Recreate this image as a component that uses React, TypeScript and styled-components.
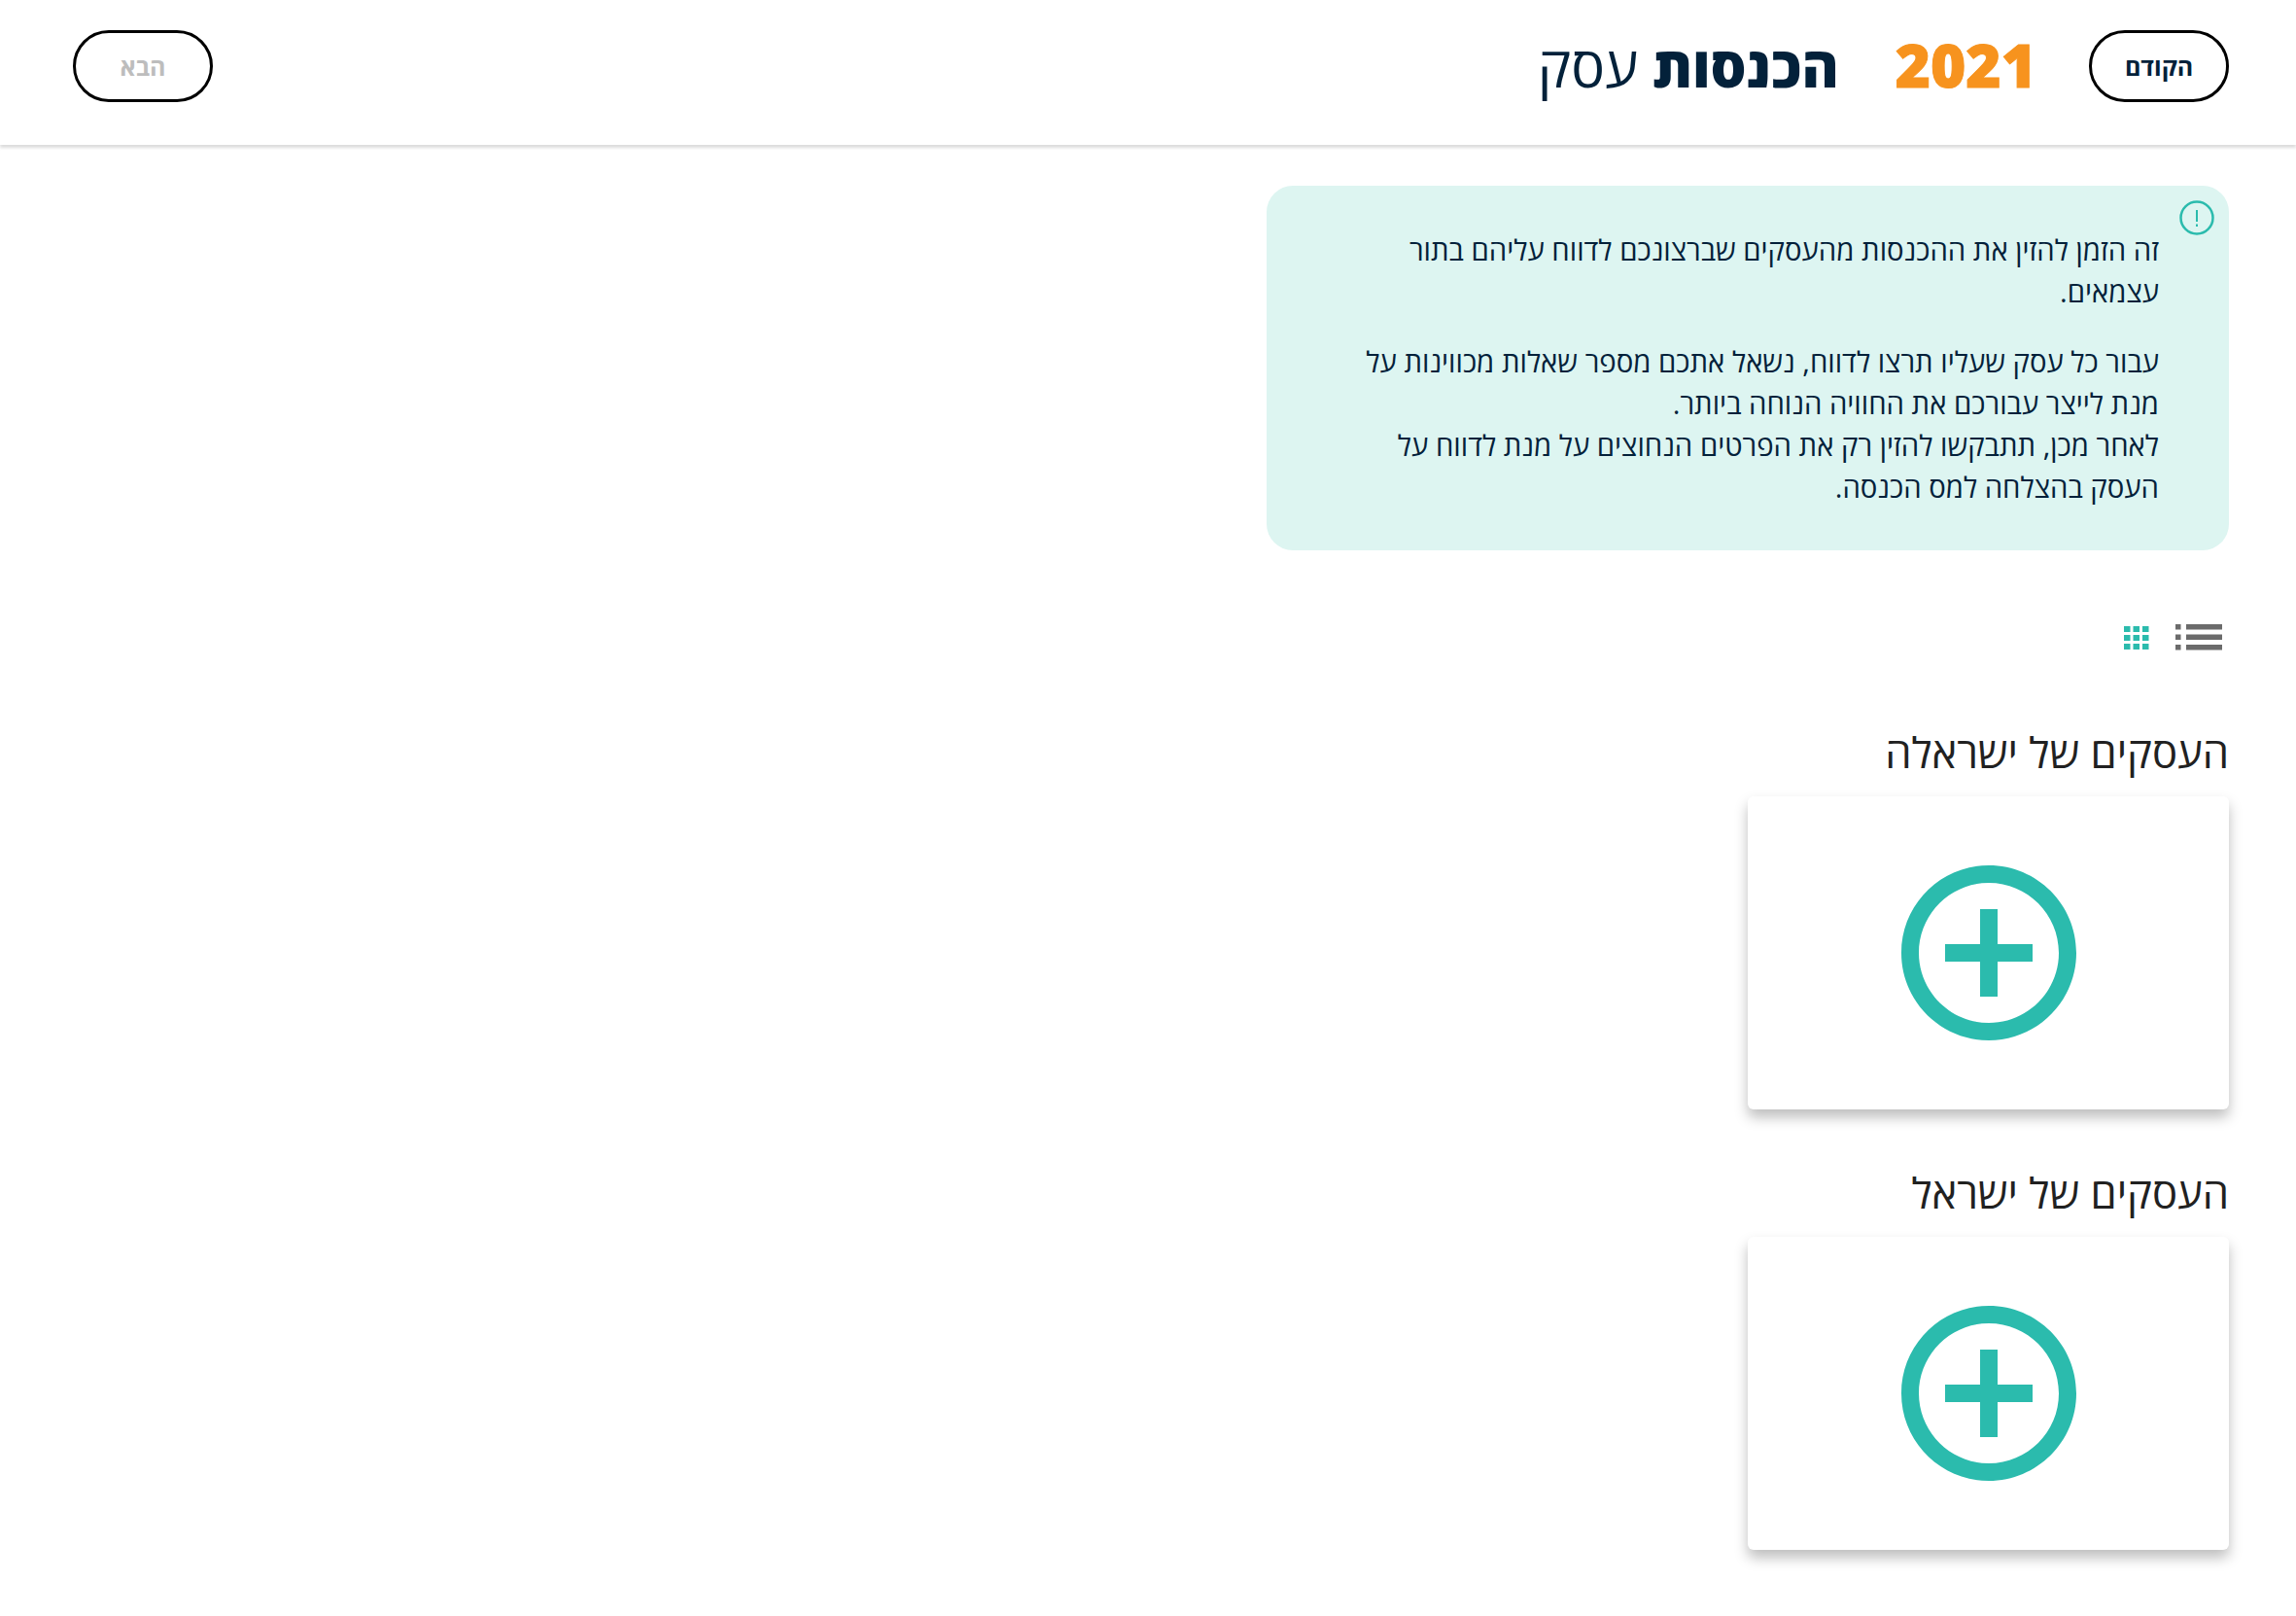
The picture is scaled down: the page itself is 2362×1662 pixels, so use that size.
import { MdAddCircleOutline } from 'react-icons/md';
import styled, { createGlobalStyle } from 'styled-components';

const sections = ['העסקים של ישראלה', 'העסקים של ישראל'];

const GridIcon = () => (
  <svg width="26" height="24" viewBox="0 0 26 24" fill="#2bbbad">
    {[0, 9, 18].map((y) =>
      [0, 9.5, 19].map((x) => <rect key={`${x}-${y}`} x={x} y={y} width="6.5" height="6" />),
    )}
  </svg>
);

const ListIcon = () => (
  <svg width="48" height="28" viewBox="0 0 48 28" fill="#6b6b6b">
    {[0, 10.5, 21].map((y) => (
      <g key={y}>
        <rect x="0" y={y} width="5.5" height="5.5" />
        <rect x="11" y={y} width="37" height="5.5" />
      </g>
    ))}
  </svg>
);

const App = () => {
  return (
    <Page dir="rtl">
      <GlobalStyle />
      <Header>
        <HeaderSide>
          <NavButton>הקודם</NavButton>
          <Year>2021</Year>
          <Title>
            <b>הכנסות</b> עסק
          </Title>
        </HeaderSide>
        <NavButton disabled>הבא</NavButton>
      </Header>
      <Main>
        <Notice>
          <NoticeIcon>
            <svg width="36" height="36" viewBox="0 0 36 36" fill="none">
              <circle cx="18" cy="18" r="16.5" stroke="#2bbbad" strokeWidth="2.5" />
              <rect x="17" y="10" width="2" height="12" fill="#2bbbad" />
              <rect x="17" y="24.5" width="2" height="2.5" fill="#2bbbad" />
            </svg>
          </NoticeIcon>
          <NoticeText>זה הזמן להזין את ההכנסות מהעסקים שברצונכם לדווח עליהם בתור עצמאים.</NoticeText>
          <NoticeText>
            עבור כל עסק שעליו תרצו לדווח, נשאל אתכם מספר שאלות מכווינות על מנת לייצר עבורכם את החוויה הנוחה ביותר.
            <br />
            לאחר מכן, תתבקשו להזין רק את הפרטים הנחוצים על מנת לדווח על העסק בהצלחה למס הכנסה.
          </NoticeText>
        </Notice>
        <ViewToggle>
          <ListIcon />
          <GridIcon />
        </ViewToggle>
        {sections.map((name) => (
          <Section key={name}>
            <SectionTitle>{name}</SectionTitle>
            <AddCard>
              <MdAddCircleOutline size={216} color="#2bbbad" />
            </AddCard>
          </Section>
        ))}
      </Main>
    </Page>
  );
};

export default App;

const GlobalStyle = createGlobalStyle`
  html, body {
    margin: 0;
    background: #fff;
    font-family: "Open Sans", "Noto Sans", "Liberation Sans", sans-serif;
  }
`;

const Page = styled.div`
  height: 1662px;
  overflow: hidden;
  color: #03213a;
`;

const Header = styled.header`
  display: flex;
  align-items: center;
  justify-content: space-between;
  box-sizing: border-box;
  height: 149px;
  padding: 0 69px 14px 75px;
  box-shadow: 0 3px 3px rgba(0, 0, 0, 0.14);
`;

const HeaderSide = styled.div`
  display: flex;
  align-items: center;
`;

const NavButton = styled.button`
  width: 144px;
  height: 74px;
  border: 3px solid #000;
  border-radius: 37px;
  background: #fff;
  color: ${(p) => (p.disabled ? '#bdbdbd' : '#03213a')};
  font-family: inherit;
  font-size: 25px;
  font-weight: 700;
`;

const Year = styled.div`
  margin: 0 54px 3px 58px;
  color: #f7931e;
  font-size: 62px;
  font-weight: 800;
  line-height: 1;
  -webkit-text-stroke: 1px #f7931e;
`;

const Title = styled.h1`
  margin: 0;
  font-size: 58px;
  font-weight: 400;
  line-height: 1;
  b {
    font-weight: 800;
  }
`;

const Main = styled.main`
  padding: 42px 69px 0 0;
`;

const Notice = styled.div`
  position: relative;
  box-sizing: border-box;
  width: 990px;
  height: 375px;
  padding: 45px 72px 0;
  border-radius: 27px;
  background: #ddf5f1;
`;

const NoticeIcon = styled.div`
  position: absolute;
  top: 15px;
  right: 15px;
  line-height: 0;
`;

const NoticeText = styled.p`
  margin: 0 0 29px;
  font-size: 29.3px;
  line-height: 43px;
`;

const ViewToggle = styled.div`
  display: flex;
  align-items: center;
  gap: 27px;
  margin: 76px 7px 0 0;
`;

const Section = styled.section`
  width: 495px;
  margin-top: 56px;
  &:first-of-type {
    margin-top: 74px;
  }
`;

const SectionTitle = styled.h2`
  margin: 0 0 15px;
  color: #212121;
  font-size: 43.5px;
  font-weight: 400;
  line-height: 60px;
`;

const AddCard = styled.div`
  display: flex;
  align-items: center;
  justify-content: center;
  height: 322px;
  border-radius: 6px;
  background: #fff;
  box-shadow: 0 8px 14px rgba(0, 0, 0, 0.26);
`;
